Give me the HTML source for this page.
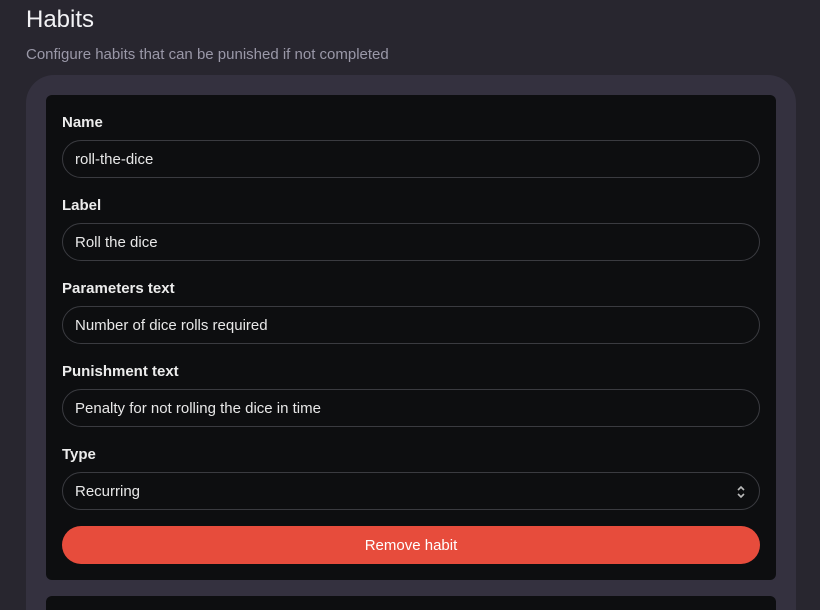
<html><head><style>
html,body{margin:0;width:820px;height:610px;overflow:hidden}
body{background:#28262f;font-family:"Liberation Sans",sans-serif;position:relative}
h1{position:absolute;left:26px;top:6px;margin:0;font-size:24px;font-weight:500;color:#f2f2f5}
.sub{position:absolute;left:26px;top:46px;font-size:15px;color:#9a98a8}
.panel{position:absolute;left:26px;top:75px;width:770px;height:535px;background:#34313f;border-radius:28px 28px 0 0}
.card{position:absolute;left:46px;width:730px;background:#0d0e10;border-radius:6px}
.lbl{position:absolute;left:62px;font-size:15px;font-weight:bold;color:#ececec}
.in{position:absolute;left:62px;width:698px;height:38px;box-sizing:border-box;border:1px solid #3a3b40;border-radius:19px;font-size:15px;color:#e8e8e8;padding-left:12px;line-height:38px}
.btn{position:absolute;left:62px;top:526px;width:698px;height:38px;border-radius:19px;background:#e74c3c;color:#fff;font-size:15px;text-align:center;line-height:39px}
</style></head><body>
<h1>Habits</h1>
<div class="sub">Configure habits that can be punished if not completed</div>
<div class="panel"></div>
<div class="card" style="top:95px;height:485px"></div>
<div class="card" style="top:596px;height:14px;border-radius:6px 6px 0 0"></div>
<div class="lbl" style="top:114px">Name</div>
<div class="in" style="top:140px">roll-the-dice</div>
<div class="lbl" style="top:197px">Label</div>
<div class="in" style="top:223px">Roll the dice</div>
<div class="lbl" style="top:280px">Parameters text</div>
<div class="in" style="top:306px">Number of dice rolls required</div>
<div class="lbl" style="top:363px">Punishment text</div>
<div class="in" style="top:389px">Penalty for not rolling the dice in time</div>
<div class="lbl" style="top:446px">Type</div>
<div class="in" style="top:472px">Recurring
<svg style="position:absolute;right:13px;top:11px" width="10" height="16" viewBox="0 0 10 16"><path d="M2 6L5 3L8 6M2 10L5 13L8 10" fill="none" stroke="#bbb" stroke-width="1.6"/></svg></div>
<div class="btn">Remove habit</div>
</body></html>
